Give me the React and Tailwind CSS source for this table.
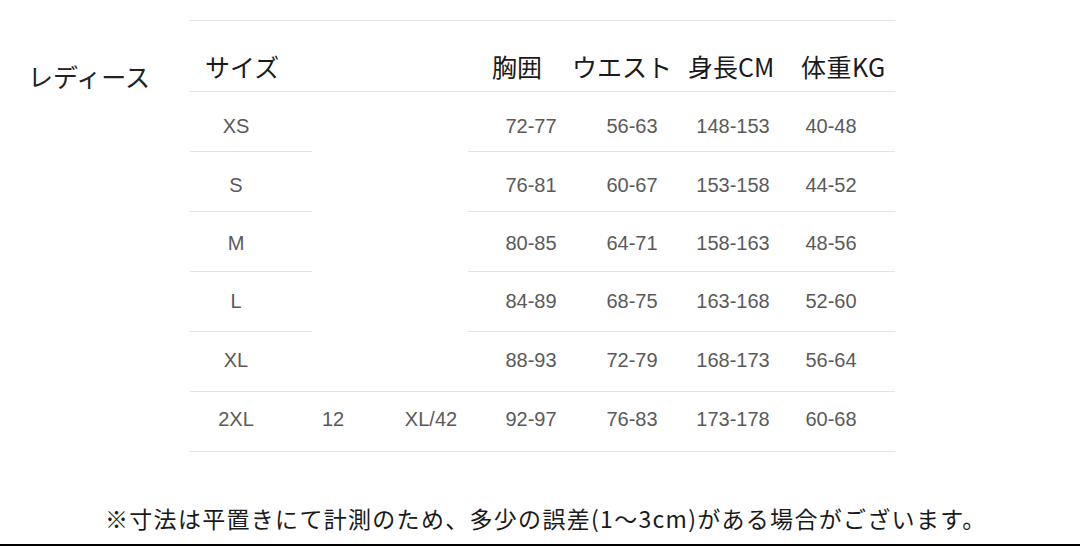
const rows = [
  { size: 'XS', a: '', b: '', bust: '72-77', waist: '56-63', height: '148-153', weight: '40-48', pad: 'pt-[8px]' },
  { size: 'S', a: '', b: '', bust: '76-81', waist: '60-67', height: '153-158', weight: '44-52', pad: 'pt-[6px]' },
  { size: 'M', a: '', b: '', bust: '80-85', waist: '64-71', height: '158-163', weight: '48-56', pad: 'pt-[2px]' },
  { size: 'L', a: '', b: '', bust: '84-89', waist: '68-75', height: '163-168', weight: '52-60', pad: 'pb-[2px]' },
  { size: 'XL', a: '', b: '', bust: '88-93', waist: '72-79', height: '168-173', weight: '56-64', pad: 'pb-[4px]', full: true },
  { size: '2XL', a: '12', b: 'XL/42', bust: '92-97', waist: '76-83', height: '173-178', weight: '60-68', pad: 'pb-[6px]', full: true },
];

const jp = "font-['Noto_Sans_CJK_JP',sans-serif]";
const num = "font-['Liberation_Sans',Arial,sans-serif]";

function Row({ r }) {
  const line = 'border-b border-[#e4e4e4]';
  const cell = `${r.pad} flex items-center justify-center`;
  return (
    <div className={`flex h-[60px] text-[20px] text-[#5a5a5a] ${num}`}>
      <div className={`w-[122px] pr-[30px] ${cell} ${line}`}>{r.size}</div>
      <div className={`w-[42px] ${cell} ${r.full ? line : ''}`}>{r.a}</div>
      <div className={`w-[114px] pl-[40px] ${cell} ${r.full ? line : ''}`}>{r.b}</div>
      <div className={`flex flex-1 ${line}`}>
        <div className={`w-[126px] ${cell}`}>{r.bust}</div>
        <div className={`w-[76px] ${cell}`}>{r.waist}</div>
        <div className={`w-[126px] ${cell}`}>{r.height}</div>
        <div className={`w-[70px] ${cell}`}>{r.weight}</div>
      </div>
    </div>
  );
}

export default function App() {
  return (
    <div className="w-[1080px] h-[546px] bg-white relative overflow-hidden">
      <div className="flex items-start">
        <div className={`w-[190px] pl-[28px] pt-[61px] text-[25px] leading-[30px] text-[#222] ${jp}`}>
          レディース
        </div>
        <div className="mt-[20px] w-[705px] border-t border-[#e4e4e4]">
          <div className={`flex h-[71px] pt-[21px] items-center text-[25px] text-[#1a1a1a] border-b border-[#e4e4e4] ${jp}`}>
            <span className="ml-[15px] w-[287px]">サイズ</span>
            <span className="w-[80px]">胸囲</span>
            <span className="w-[116px]">ウエスト</span>
            <span className="w-[113px]">身長CM</span>
            <span className="tracking-[0.5px]">体重KG</span>
          </div>
          {rows.map((r) => (
            <Row key={r.size} r={r} />
          ))}
        </div>
      </div>
      <div className={`mt-[50px] pl-[105px] text-[23px] leading-[32px] tracking-[1.3px] text-[#1a1a1a] ${jp}`}>
        ※寸法は平置きにて計測のため、多少の誤差(1～3cm)がある場合がございます。
      </div>
      <div className="absolute left-0 right-0 bottom-0 h-[2px] bg-black" />
    </div>
  );
}
